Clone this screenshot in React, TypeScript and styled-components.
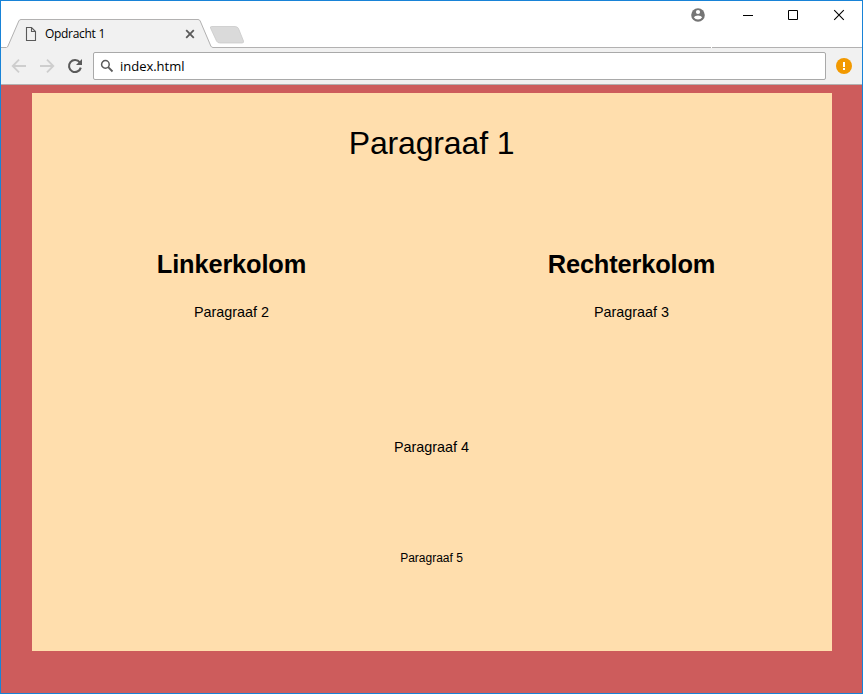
import React from "react";
import styled, { createGlobalStyle } from "styled-components";

const GlobalStyle = createGlobalStyle`
  *, *::before, *::after { box-sizing: border-box; }
  body { margin: 0; overflow: hidden; }
`;

const Window = styled.div`
  display: flex;
  flex-direction: column;
  width: 863px;
  height: 694px;
  border: 1px solid #1883d7;
  background: #cd5c5c;
  font-family: "Open Sans", "Noto Sans", sans-serif;
  color: #000;
`;

const TitleBar = styled.header`
  display: flex;
  position: relative;
  height: 47px;
  flex: none;
  background: #fff;
`;

const TabShapes = styled.svg`
  position: absolute;
  left: 0;
  top: 0;
`;

const Tab = styled.div`
  display: flex;
  position: relative;
  align-items: center;
  width: 206px;
  height: 28px;
  margin: 19px 0 0 5px;
  padding: 0 17px 0 18px;
`;

const TabTitle = styled.span`
  flex: 1;
  margin-left: 8px;
  font-size: 12px;
  line-height: 16px;
  letter-spacing: -0.3px;
  white-space: nowrap;
`;

const WindowControls = styled.div`
  display: flex;
  position: relative;
  margin-left: auto;
  height: 28px;
`;

const Toolbar = styled.nav`
  display: flex;
  align-items: center;
  flex: none;
  height: 37px;
  padding: 0 10px 0 9px;
  background: #f1f1f1;
  border-bottom: 1px solid #b2b0b0;
`;

const NavIcons = styled.svg`
  flex: none;
  margin-right: 7px;
`;

const AddressBar = styled.div`
  display: flex;
  align-items: center;
  flex: 1;
  height: 28px;
  padding-left: 6px;
  border: 1px solid #a9a9a9;
  border-radius: 2px;
  background: #fff;
`;

const Address = styled.span`
  margin-left: 6px;
  font-size: 13px;
  line-height: 18px;
  letter-spacing: -0.02px;
`;

const Alert = styled.svg`
  flex: none;
  margin-left: 10px;
`;

const Viewport = styled.main`
  flex: 1;
  padding-top: 8px;
  background: #cd5c5c;
  font-family: Arial, "Liberation Sans", sans-serif;
  text-align: center;
`;

const Container = styled.div`
  width: 800px;
  height: 558px;
  margin: 0 0 0 31px;
  background: #ffdead;
`;

const Intro = styled.section`
  height: 132px;
  padding-top: 32px;
`;

const Columns = styled.section`
  display: grid;
  grid-template-columns: 1fr 1fr;
  height: 214px;
`;

const Column = styled.article`
  padding-top: 24px;
`;

const ColumnTitle = styled.h2`
  margin: 0 0 25px;
  padding-right: 1px;
  font-size: 25.4px;
  line-height: 30px;
  letter-spacing: -0.15px;
`;

const Section = styled.section<{ $height: number }>`
  height: ${({ $height }) => $height}px;
`;

const Paragraph = styled.p<{ $size?: number; $line?: number; $spacing?: number }>`
  margin: 0;
  padding-right: 1px;
  font-size: ${({ $size = 14.4 }) => $size}px;
  line-height: ${({ $line = 16 }) => $line}px;
  letter-spacing: ${({ $spacing = 0 }) => $spacing}px;
`;

export default function App() {
  return (
    <>
      <GlobalStyle />
      <Window>
        <TitleBar>
          <TabShapes width="861" height="47" viewBox="1 1 861 47" fill="none" aria-hidden="true">
            <path d="M7 48 L19.5 19.5 H199.5 L212 48Z" fill="#f1f1f1" />
            <path d="M1 47.5H6.5Q7.5 47.5 8 46L18.8 21Q19.5 19.5 21 19.5H198Q199.5 19.5 200.2 21L210.8 46Q211.5 47.5 213 47.5H711M712 47.5H862" stroke="#b2b1b1" />
            <path d="M211.5 26.5H235Q237.5 26.5 238.5 28.5L243.5 41Q244 43 242 43H220Q217.5 43 216.5 41L210.5 28Q210 26.5 211.5 26.5Z" fill="#dadada" stroke="#c6c6c6" strokeWidth=".7" />
          </TabShapes>
          <Tab>
            <svg width="13" height="14" viewBox="0 0 13 14" fill="none" aria-hidden="true">
              <path d="M2.5.5H7.5L11.5 4.5V13.5H2.5ZM7.5.5V4.5H11.5" stroke="#5a5a5a" strokeWidth="1.1" />
            </svg>
            <TabTitle>Opdracht 1</TabTitle>
            <svg width="10" height="10" viewBox="0 0 10 10" aria-hidden="true">
              <path d="M1.2 1.2 8.8 8.8M8.8 1.2 1.2 8.8" stroke="#5a5a5a" strokeWidth="1.8" />
            </svg>
          </Tab>
          <WindowControls>
            <svg width="180" height="28" viewBox="682 1 180 28" fill="none" aria-hidden="true">
              <circle cx="698" cy="15" r="6.8" fill="#757575" />
              <circle cx="698" cy="12" r="2.1" fill="#fff" />
              <path d="M693.8 17.2Q695 15.5 698 15.5T702.2 17.2Q700.8 19.5 698 19.5T693.8 17.2Z" fill="#fff" />
              <path d="M743 15.5H753" stroke="#000" />
              <path d="M788.5 10.5H797.5V19.5H788.5Z" stroke="#000" />
              <path d="M834.2 10.2 843.8 19.8M843.8 10.2 834.2 19.8" stroke="#000" strokeWidth="1.1" />
            </svg>
          </WindowControls>
        </TitleBar>
        <Toolbar>
          <NavIcons width="76" height="20" viewBox="10 56 76 20" fill="none" aria-hidden="true">
            <path d="M26 66H13M19 59.7 12.7 66 19 72.3M40 66H53M47 59.7 53.3 66 47 72.3" stroke="#cecece" strokeWidth="1.8" />
            <path d="M79.8 62.4A6 6 0 1 0 80.8 67.6" stroke="#5a5a5a" strokeWidth="2.1" />
            <path d="M82 59V65H76Z" fill="#5a5a5a" />
          </NavIcons>
          <AddressBar>
            <svg width="14" height="14" viewBox="0 0 14 14" fill="none" aria-hidden="true">
              <circle cx="5.4" cy="5.4" r="3.8" stroke="#5a5a5a" strokeWidth="1.5" />
              <path d="M8.2 8.2 12.5 12.5" stroke="#5a5a5a" strokeWidth="1.8" />
            </svg>
            <Address>index.html</Address>
          </AddressBar>
          <Alert width="16" height="16" viewBox="0 0 16 16" aria-hidden="true">
            <circle cx="8" cy="8" r="8" fill="#f29900" />
            <path d="M7 4H9V9H7ZM7 10H9V12H7Z" fill="#fff" />
          </Alert>
        </Toolbar>
        <Viewport>
          <Container>
            <Intro>
              <Paragraph $size={32} $line={36} $spacing={-0.15}>Paragraaf 1</Paragraph>
            </Intro>
            <Columns>
              <Column>
                <ColumnTitle>Linkerkolom</ColumnTitle>
                <Paragraph>Paragraaf 2</Paragraph>
              </Column>
              <Column>
                <ColumnTitle>Rechterkolom</ColumnTitle>
                <Paragraph>Paragraaf 3</Paragraph>
              </Column>
            </Columns>
            <Section $height={111}>
              <Paragraph>Paragraaf 4</Paragraph>
            </Section>
            <Section $height={101}>
              <Paragraph $size={12} $line={16}>Paragraaf 5</Paragraph>
            </Section>
          </Container>
        </Viewport>
      </Window>
    </>
  );
}
